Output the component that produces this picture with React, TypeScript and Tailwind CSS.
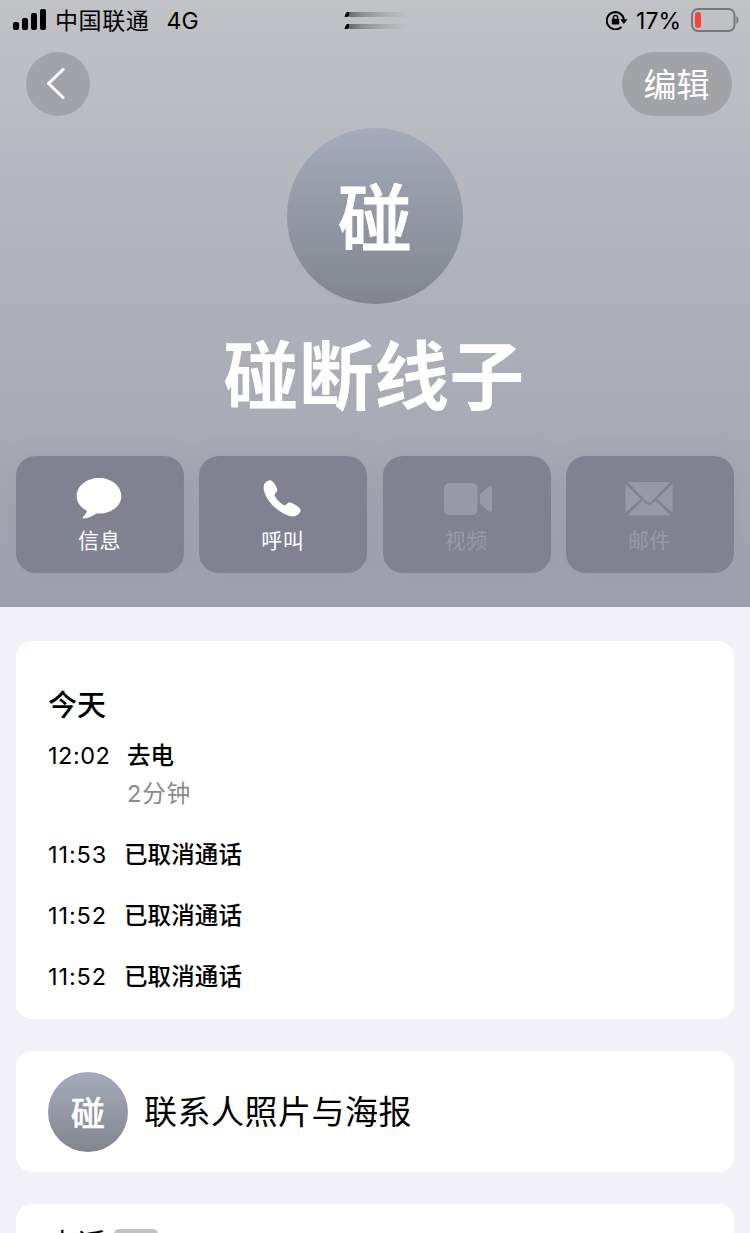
import type { ReactNode } from "react";

type CallEntry = {
  time: string;
  label: string;
  duration?: string;
};

const calls: CallEntry[] = [
  { time: "12:02", label: "去电", duration: "2分钟" },
  { time: "11:53", label: "已取消通话" },
  { time: "11:52", label: "已取消通话" },
  { time: "11:52", label: "已取消通话" },
];

function StatusBar() {
  return (
    <div className="flex h-10 items-center justify-between pr-[11px] pl-[13px] text-black">
      <div className="flex w-[300px] items-center">
        <svg width="34" height="22" viewBox="0 0 34 22" fill="currentColor">
          <rect x="0" y="13" width="6" height="8" rx="2" />
          <rect x="9" y="9" width="6" height="12" rx="2" />
          <rect x="18" y="4" width="6" height="17" rx="2" />
          <rect x="27" y="0" width="6" height="21" rx="2" />
        </svg>
        <span className="ml-2 pt-0.5 text-[23px] leading-none tracking-[0.6px]">中国联通</span>
        <span className="ml-[17px] pt-0.5 text-[23px] leading-none tracking-[0.3px]">4G</span>
      </div>

      <svg className="ml-[5px]" width="70" height="20" viewBox="0 0 70 20">
        <defs>
          <linearGradient id="trail" x1="0" x2="1" y1="0" y2="0">
            <stop offset="0" stopColor="#222" stopOpacity="0.6" />
            <stop offset="0.25" stopColor="#555" stopOpacity="0.45" />
            <stop offset="1" stopColor="#888" stopOpacity="0" />
          </linearGradient>
        </defs>
        <rect x="4" y="2" width="62" height="5" rx="1" fill="url(#trail)" />
        <rect x="4" y="14" width="62" height="5" rx="1" fill="url(#trail)" />
        <path d="M0.500 7L1.500 4L3 2h2v3L3.500 7zM0.500 19L1.500 16L3 14h2v3L3.500 19z" fill="#000" />
      </svg>

      <div className="flex w-[300px] items-center justify-end">
        <svg width="22" height="20" viewBox="0 0 22 20" fill="none">
          <path d="M14.800 17.400A8.600 8.600 0 1 1 17.900 10" stroke="#000" strokeWidth="2" strokeLinecap="round" />
          <path d="M14.300 9.200h7.200L17.900 14z" fill="#000" />
          <rect x="5.800" y="8.800" width="7.400" height="5.800" rx="0.800" fill="#000" />
          <path d="M7.400 9V7.600a2.100 2.100 0 0 1 4.200 0V9" stroke="#000" strokeWidth="1.400" />
        </svg>
        <span className="ml-2 pt-0.5 text-[23px] leading-none">17%</span>
        <svg className="ml-[10px]" width="48" height="24" viewBox="0 0 48 24" fill="none">
          <rect x="1" y="1" width="42.500" height="22" rx="6" stroke="#77787c" strokeWidth="2" />
          <path d="M45.500 8v8c1.300-.7 2-2.200 2-4s-.7-3.300-2-4z" fill="#77787c" />
          <rect x="4" y="4" width="6" height="16" rx="3" fill="#f8423a" />
        </svg>
      </div>
    </div>
  );
}

function Action({ label, disabled, children }: { label: string; disabled?: boolean; children: ReactNode }) {
  return (
    <button
      disabled={disabled}
      className={`flex h-[117px] flex-col items-center rounded-[20px] bg-[#808292] pt-5 shadow-[0_0_24px_rgba(110,112,130,0.12)] ${
        disabled ? "text-[#9899a7]" : "text-white"
      }`}
    >
      <span className="flex h-[44px] items-center justify-center">{children}</span>
      <span className="mt-[5px] mr-px text-[21px] leading-[32px] tracking-[0.5px]">{label}</span>
    </button>
  );
}

function ContactHeader() {
  return (
    <header className="h-[607px] bg-linear-to-b from-[#c1c2c6] via-[#b0b2bb] via-45% to-[#9fa0ae]">
      <StatusBar />

      <div className="flex justify-between pt-3 pr-[18px] pl-[26px] text-white">
        <button className="flex size-16 items-center justify-center rounded-full bg-[#a2a3a8]">
          <svg className="mr-1" width="20" height="32" viewBox="0 0 20 32" fill="none">
            <path d="M17 1.500L2.500 15.500L17 29.500" stroke="currentColor" strokeWidth="3" strokeLinecap="round" strokeLinejoin="round" />
          </svg>
        </button>
        <button className="h-16 w-[110px] rounded-full bg-[#a2a3a7] pt-px pr-px text-[33px] leading-[64px]">编辑</button>
      </div>

      <div className="mx-auto mt-3 flex size-44 items-center justify-center rounded-full bg-linear-to-b from-[#a5abbb] to-[#82858e] pt-1.5 text-[74px] font-medium text-white [-webkit-text-stroke:1px_white]">
        碰
      </div>

      <h1 className="mt-[23px] pr-0.5 text-center text-[75px] leading-[100px] font-bold tracking-[0.2px] text-white">
        碰断线子
      </h1>

      <div className="mt-[29px] grid grid-cols-4 gap-[15.33px] px-4">
        <Action label="信息">
          <svg className="mr-0.5" width="46" height="44" viewBox="0 0 46 44" fill="currentColor">
            <path d="M23 2C10.700 2 .7 9.800.7 20c0 6.300 3.900 11.500 10.200 14.700-.5 2.300-2.100 4.400-3.700 5.900-.8.800-.3 2 .9 1.900 4.600-.4 8.900-2.600 12-5l2.900.1c12.300 0 22.300-7.600 22.300-17.600S35.300 2 23 2z" />
          </svg>
        </Action>
        <Action label="呼叫">
          <svg className="mr-0.5" width="38" height="38" viewBox="0 0 38 38" fill="currentColor">
            <path d="M2.200 3.700C4.500 1.200 6.800.4 9 2c2.500 1.900 4 5.200 5 7.600.6 1.600.1 2.800-1.200 4.100-1.500 1.500-1.600 2.500-.6 4.100 2 3.200 4.500 5.700 7.500 7.700 1.500 1 2.600.9 4.100-.6 1.300-1.300 2.600-1.900 4.200-1.200 3.400 1.300 6.200 3 8.500 5.400 1.700 1.800 1.300 3.800-.9 6-3 3-7.500 2.900-12.300.7C13.500 31.500 5.300 23.200 1.700 14.200.1 10.100.3 6.100 2.200 3.700z" />
          </svg>
        </Action>
        <Action label="视频" disabled>
          <svg className="mt-0.5 ml-0.5" width="48" height="32" viewBox="0 0 48 32" fill="currentColor">
            <rect x="0" y="0" width="33.500" height="32" rx="5.500" />
            <path d="M36 11.500l8-7.300c2-1.800 4-1.500 4 .8v22c0 2.300-2 2.600-4 .8l-8-7.300z" />
          </svg>
        </Action>
        <Action label="邮件" disabled>
          <svg className="mt-0.5 mr-px" width="48" height="34" viewBox="0 0 48 34" fill="currentColor">
            <path d="M2.800 0h42.400L26.300 19.400a3.400 3.400 0 0 1-4.800 0zM.5 2.300V30.500L15.800 17zM47.500 2.300V30.500L32 17zM17.500 18.500L2.500 33.500h43L30.500 18.500l-2.600 2.600a5.500 5.500 0 0 1-7.900 0z" />
          </svg>
        </Action>
      </div>
    </header>
  );
}

function CallHistory() {
  return (
    <section className="h-[378px] rounded-[16px] bg-white px-8 pt-[45px]">
      <h2 className="text-[29px] leading-10 font-medium">今天</h2>
      <ul className="mt-[11px] space-y-[23px]">
        {calls.map((call, i) => (
          <li key={i} className="flex text-[23.5px] leading-[38px]">
            <span className={call.duration ? "w-[79px] tracking-[0.5px]" : "w-[76px] tracking-[0.9px]"}>
              {call.time}
            </span>
            <div>
              <p className="font-medium tracking-[0.1px]">{call.label}</p>
              {call.duration && <p className="tracking-[1px] text-[#8a8a8e]">{call.duration}</p>}
            </div>
          </li>
        ))}
      </ul>
    </section>
  );
}

export default function App() {
  return (
    <div
      lang="zh-CN"
      className="h-[1233px] w-[750px] overflow-hidden bg-[#f2f1f8] font-['Inter','Noto_Sans_CJK_SC',sans-serif] text-black"
    >
      <ContactHeader />

      <main className="flex flex-col gap-8 px-4 pt-[34px]">
        <CallHistory />

        <section className="flex h-[121px] items-center rounded-[16px] bg-white px-8">
          <div className="flex size-20 items-center justify-center rounded-full bg-linear-to-b from-[#a5abbb] to-[#82858e] pt-[3px] text-[34px] font-medium text-white [-webkit-text-stroke:0.4px_white]">
            碰
          </div>
          <p className="ml-4 pt-[3px] text-[33px] tracking-[0.5px]">联系人照片与海报</p>
        </section>

        <section className="flex h-[120px] items-start rounded-[16px] bg-white px-8 pt-[21px]">
          <span className="text-[29px] leading-10">电话</span>
          <span className="mt-1 ml-2 h-8 w-11 rounded-[5px] bg-[#c4c4c8]" />
        </section>
      </main>
    </div>
  );
}
